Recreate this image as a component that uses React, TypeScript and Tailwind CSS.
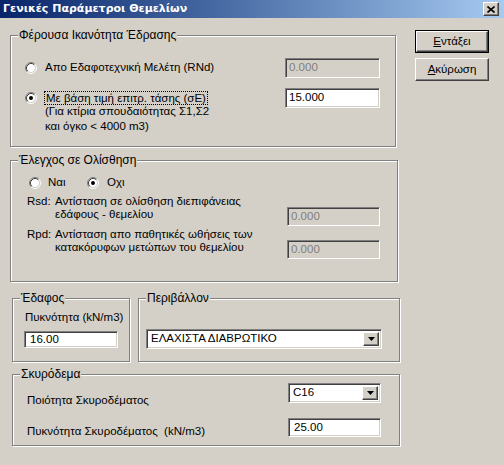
import type { ReactNode } from 'react';

const FONT = { fontFamily: '"Liberation Sans", Arial, sans-serif' };

const sunken =
  'border border-t-[#808080] border-l-[#808080] border-b-white border-r-white shadow-[inset_1px_1px_0_#404040,inset_-1px_-1px_0_#d4d0c8]';
const raised =
  'border border-t-white border-l-white border-b-[#404040] border-r-[#404040] shadow-[inset_-1px_-1px_0_#808080,inset_1px_1px_0_#d4d0c8]';

function Group({ legend, className, children }: { legend: string; className: string; children?: ReactNode }) {
  return (
    <div className={`relative border border-[#808080] shadow-[inset_1px_1px_0_#fff,1px_1px_0_#fff] ${className}`}>
      <span className="absolute left-[7px] -top-[8px] bg-[#d4d0c8] px-[1px] leading-[14px] text-[12px]">{legend}</span>
      {children}
    </div>
  );
}

function Radio({ checked }: { checked?: boolean }) {
  return (
    <svg width="12" height="12" viewBox="0 0 12 12" className="shrink-0">
      <circle cx="6" cy="6" r="4.5" fill="#fff" />
      <path d="M2.11 9.89 A5.5 5.5 0 0 1 9.89 2.11" fill="none" stroke="#808080" />
      <path d="M9.89 2.11 A5.5 5.5 0 0 1 2.11 9.89" fill="none" stroke="#fff" />
      <path d="M2.82 9.18 A4.5 4.5 0 0 1 9.18 2.82" fill="none" stroke="#404040" />
      <path d="M9.18 2.82 A4.5 4.5 0 0 1 2.82 9.18" fill="none" stroke="#d4d0c8" />
      {checked && <circle cx="6" cy="6" r="2" fill="#000" />}
    </svg>
  );
}

function Field({ value, disabled, className }: { value: string; disabled?: boolean; className: string }) {
  return (
    <div
      className={`${sunken} ${className} flex items-center pl-[3px] leading-none ${
        disabled ? 'bg-[#d4d0c8] text-[#808080]' : 'bg-white text-black'
      }`}
    >
      {value}
    </div>
  );
}

function Combo({ value, className }: { value: string; className: string }) {
  return (
    <div className={`${sunken} ${className} flex items-center bg-white p-[2px]`}>
      <span className="flex-1 pl-[2px] leading-none">{value}</span>
      <div className={`${raised} bg-[#d4d0c8] w-[16px] h-full flex items-center justify-center`}>
        <svg width="7" height="4" viewBox="0 0 7 4">
          <path d="M0 0h7L3.5 4z" fill="#000" />
        </svg>
      </div>
    </div>
  );
}

function Button({ children, isDefault }: { children: ReactNode; isDefault?: boolean }) {
  return (
    <div className={`w-[74px] h-[23px] ${isDefault ? 'border border-black' : ''}`}>
      <div className={`${raised} bg-[#d4d0c8] w-full h-full flex items-center justify-center`}>{children}</div>
    </div>
  );
}

export default function App() {
  return (
    <div className="w-[504px] h-[465px] bg-[#d4d0c8] text-[11.5px] text-black flex flex-col overflow-hidden" style={FONT}>
      <div className="h-[18px] shrink-0 flex items-center pl-[3px] pr-[5px] bg-gradient-to-r from-[#0a246a] to-[#a6caf0]">
        <span className="text-white font-bold text-[11px] font-['DejaVu_Sans',sans-serif]">Γενικές Παράμετροι Θεμελίων</span>
        <div className={`${raised} ml-auto w-[16px] h-[14px] bg-[#d4d0c8] flex items-center justify-center`}>
          <svg width="8" height="7" viewBox="0 0 8 7">
            <path d="M0.5 0.5L7.5 6.5M7.5 0.5L0.5 6.5" stroke="#000" strokeWidth="1.6" />
          </svg>
        </div>
      </div>

      <div className="flex">
        <div className="ml-[10px] mt-[17px] w-[390px] flex flex-col">
          <Group legend="Φέρουσα Ικανότητα Έδρασης" className="w-[386px] h-[112px] pt-[22px] pl-[14px] pr-[15px]">
            <div className="flex items-center h-[20px]">
              <Radio />
              <span className="ml-[8px]">Απο Εδαφοτεχνική Μελέτη (RNd)</span>
              <Field value="0.000" disabled className="ml-auto w-[95px] h-[20px]" />
            </div>
            <div className="flex items-center h-[20px] mt-[10px]">
              <Radio checked />
              <span className="ml-[7px] border border-dotted border-black px-[1px] leading-[12px]">
                Με βάση τιμή επιτρ. τάσης (σE)
              </span>
              <Field value="15.000" className="ml-auto w-[95px] h-[20px]" />
            </div>
            <div className="pl-[20px] -mt-[4px] leading-[15px]">
              (Για κτίρια σπουδαιότητας Σ1,Σ2
              <br />
              και όγκο &lt; 4000 m3)
            </div>
          </Group>

          <Group legend="Έλεγχος σε Ολίσθηση" className="mt-[13px] w-[388px] h-[122px] pt-[15px] pl-[18px] pr-[17px]">
            <div className="flex items-center h-[14px]">
              <div className="w-[58px] flex items-center">
                <Radio />
                <span className="ml-[7px]">Ναι</span>
              </div>
              <Radio checked />
              <span className="ml-[8px]">Οχι</span>
            </div>
            <div className="flex items-start mt-[5px] -ml-[2px]">
              <span className="w-[28px] leading-[13px]">Rsd:</span>
              <span className="leading-[13px] whitespace-nowrap">
                Αντίσταση σε ολίσθηση διεπιφάνειας
                <br />
                εδάφους - θεμελίου
              </span>
              <Field value="0.000" disabled className="ml-auto mt-[12px] w-[93px] h-[19px]" />
            </div>
            <div className="flex items-start mt-[2px] -ml-[2px]">
              <span className="w-[28px] leading-[13px]">Rpd:</span>
              <span className="leading-[13px] whitespace-nowrap">
                Αντίσταση απο παθητικές ωθήσεις των
                <br />
                κατακόρυφων μετώπων του θεμελίου
              </span>
              <Field value="0.000" disabled className="ml-auto mt-[12px] w-[93px] h-[19px]" />
            </div>
          </Group>

          <div className="flex mt-[16px] ml-[2px]">
            <Group legend="Έδαφος" className="w-[118px] h-[64px] pt-[11px] pl-[11px]">
              <div className="ml-[1px] leading-[14px]">Πυκνότητα (kN/m3)</div>
              <Field value="16.00" className="mt-[7px] w-[94px] h-[17px] pl-[5px]" />
            </Group>
            <Group legend="Περιβάλλον" className="ml-[8px] w-[262px] h-[64px] pt-[30px] pl-[7px]">
              <Combo value="ΕΛΑΧΙΣΤΑ ΔΙΑΒΡΩΤΙΚΟ" className="w-[236px] h-[20px]" />
            </Group>
          </div>

          <Group legend="Σκυρόδεμα" className="mt-[12px] ml-[2px] w-[388px] h-[72px] pt-[8px] pl-[14px] pr-[18px]">
            <div className="flex items-start">
              <span className="mt-[10px] leading-[14px]">Ποιότητα Σκυροδέματος</span>
              <Combo value="C16" className="ml-auto w-[93px] h-[20px]" />
            </div>
            <div className="flex items-start mt-[11px]">
              <span className="mt-[6px] leading-[14px] whitespace-pre">Πυκνότητα Σκυροδέματος  (kN/m3)</span>
              <Field value="25.00" className="ml-auto w-[93px] h-[19px] pl-[5px]" />
            </div>
          </Group>
        </div>

        <div className="ml-[15px] mt-[12px] flex flex-col gap-[5px]">
          <Button isDefault>
            <span>
              <span className="underline">Ε</span>ντάξει
            </span>
          </Button>
          <Button>
            <span>
              <span className="underline">Α</span>κύρωση
            </span>
          </Button>
        </div>
      </div>
    </div>
  );
}
